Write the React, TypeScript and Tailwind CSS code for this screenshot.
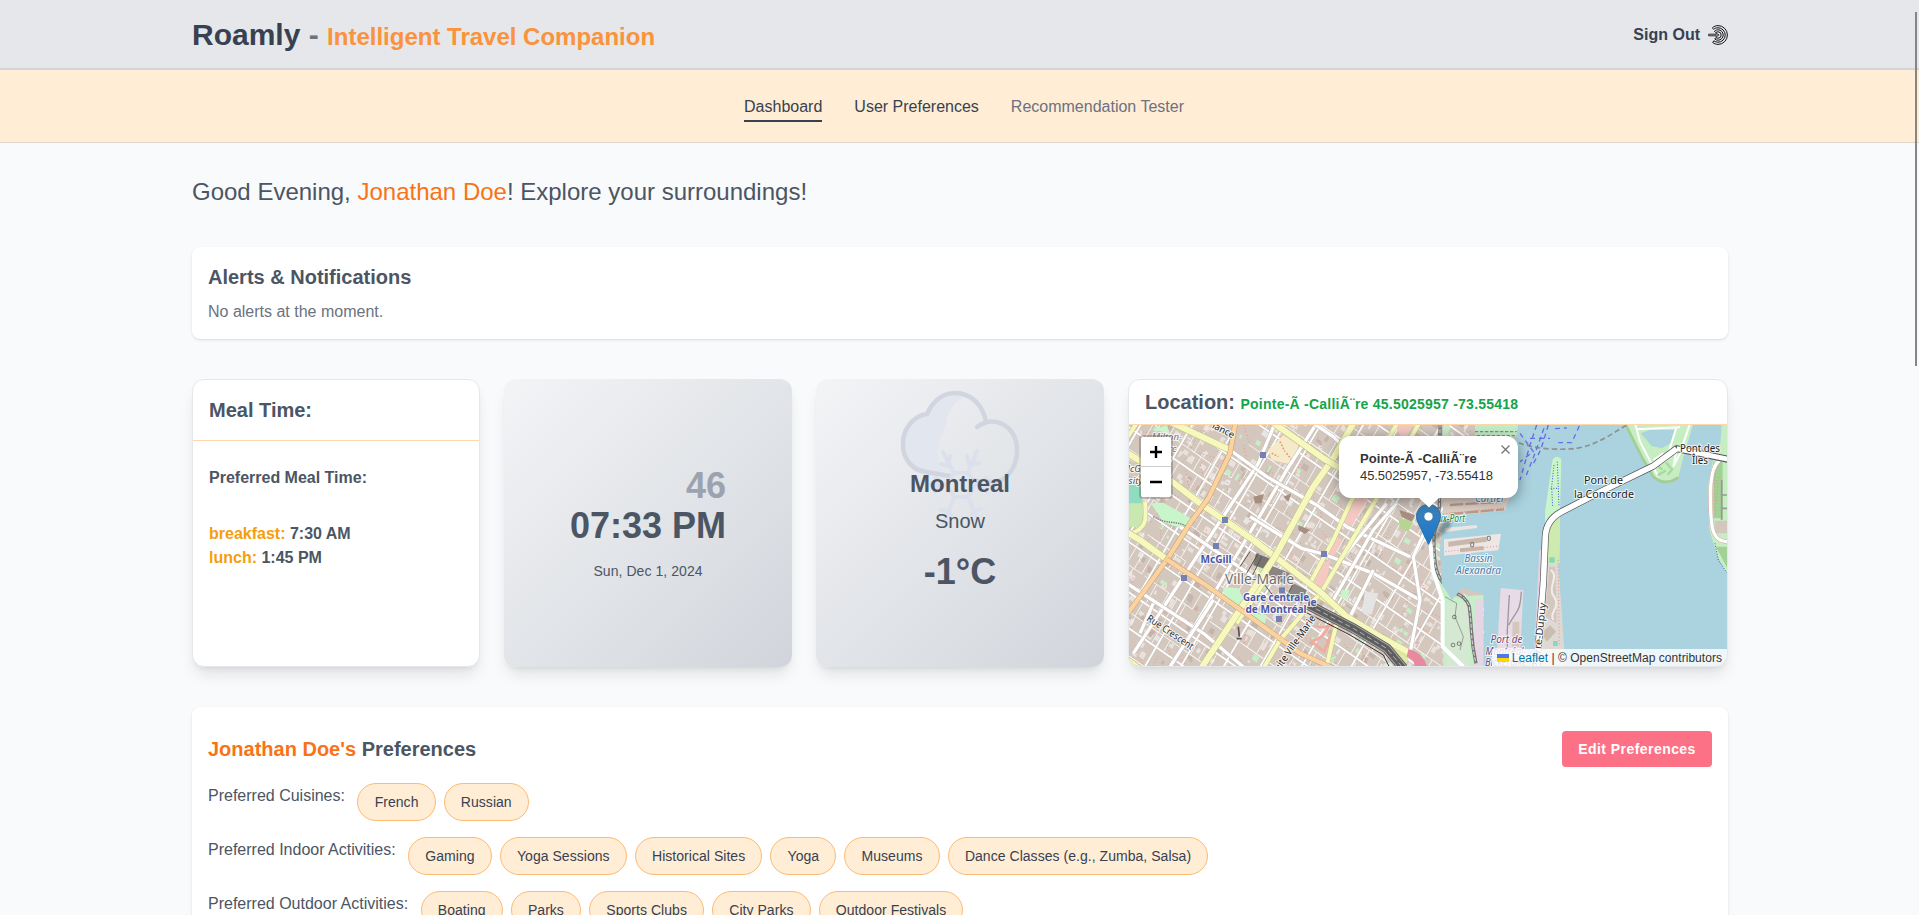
import React from "react";

const p = "fill-none";

/* Deterministic city blocks laid along the two street directions of the map. */
function buildCity() {
  let s = 7;
  const r = () => {
    s = (s * 16807) % 2147483647;
    return s / 2147483647;
  };
  const at = (a: number, b: number) => {
    const x = 1129 + a * 0.82 + b * 0.5;
    const y = 425 + a * 0.57 - b * 0.866;
    return [x, y] as const;
  };
  const quad = (a: number, b: number, w: number, h: number) => {
    const q = [at(a, b), at(a + w, b), at(a + w, b + h), at(a, b + h)];
    return "M" + q.map((c) => c[0].toFixed(1) + " " + c[1].toFixed(1)).join("L") + "Z";
  };
  const out = { light: "", grey: "", dark: "", green: "", minor: "", major: "", red: "" };
  let bi = 0;
  for (let b = -300; b < 300; bi++) {
    const h = 13 + r() * 10;
    for (let a = -20; a < 500; ) {
      const w = 16 + r() * 16;
      const [cx, cy] = at(a + w / 2, b + h / 2);
      if (cx > 1110 && cx < 1470 && cy > 405 && cy < 690) {
        const n = 2 + Math.floor(r() * 3);
        for (let k = 0; k < n; k++) {
          const q = quad(a + r() * w * 0.7, b + r() * h * 0.7, 2 + r() * 5, 2 + r() * 5);
          const t = r();
          if (t < 0.6) out.light += q;
          else if (t < 0.82) out.dark += q;
          else if (t < 0.94) out.grey += q;
          else out.green += q;
        }
        const e = quad(a, b, w, h).slice(0, -1);
        if (r() < 0.75) out.minor += e;
        const m1 = at(a + w / 2, b);
        const m2 = at(a + w / 2, b + h);
        if (r() < 0.55) out.minor += `M${m1[0].toFixed(1)} ${m1[1].toFixed(1)}L${m2[0].toFixed(1)} ${m2[1].toFixed(1)}`;
        const d1 = at(a + r() * w, b + 2);
        const d2 = at(a + r() * w, b + 2 + r() * h);
        out.red += `M${d1[0].toFixed(1)} ${d1[1].toFixed(1)}L${d2[0].toFixed(1)} ${d2[1].toFixed(1)}`;
      }
      a += w;
    }
    if (bi % 2 === 0) {
      const l1 = at(-20, b);
      const l2 = at(500, b);
      out.major += `M${l1[0].toFixed(1)} ${l1[1].toFixed(1)}L${l2[0].toFixed(1)} ${l2[1].toFixed(1)}`;
    }
    b += h;
  }
  for (let a = 10; a < 500; a += 31 + r() * 14) {
    const l1 = at(a, -300);
    const l2 = at(a, 300);
    out.major += `M${l1[0].toFixed(1)} ${l1[1].toFixed(1)}L${l2[0].toFixed(1)} ${l2[1].toFixed(1)}`;
  }
  return out;
}
const city = buildCity();

function Road({ d, c, k, w }: { d: string; c: string; k: string; w: number }) {
  return (
    <g className={p} strokeLinejoin="round">
      <path d={d} stroke={k} strokeWidth={w + 3} />
      <path d={d} stroke={c} strokeWidth={w} />
    </g>
  );
}

type LabelProps = {
  x: number; y: number; size: number; fill: string; children: string;
  rot?: number; bold?: boolean; italic?: boolean; len?: number;
};
function Label({ x, y, size, fill, children, rot = 0, bold, italic, len }: LabelProps) {
  return (
    <text
      x={x} y={y} fontSize={size} fill={fill} textAnchor="middle"
      transform={rot ? `rotate(${rot} ${x} ${y})` : undefined}
      textLength={len} lengthAdjust="spacingAndGlyphs"
      fontWeight={bold ? 700 : 400} fontStyle={italic ? "italic" : "normal"}
      stroke="#fff" strokeOpacity={0.75} strokeWidth={2.2} paintOrder="stroke" strokeLinejoin="round"
    >
      {children}
    </text>
  );
}

const stations = [[429, 255], [315, 450], [288, 528], [612, 552], [192, 624], [486, 661], [477, 747]];

const yellowWest = [
  "M0 235L27 252L150 330L240 400L400 510L465 560L600 665L680 740L780 800L880 855",
  "M240 900L465 560L580 350L640 265L700 160",
  "M150 155L330 240",
  "M455 155L610 265L670 300",
  "M10 480L60 510L140 568",
];
const yellowThin = [
  "M20 205L50 160", "M30 492C80 475 80 450 75 395", "M20 865L60 895",
  "M835 155L690 400L640 510L570 640", "M900 155L770 385L605 665L480 810L430 895",
  "M600 680L660 720L640 800L620 890", "M410 600L430 640L350 760",
];
const whiteRoads = [
  "M465 160L415 280L240 545L40 850", "M590 160L500 300L430 420L270 690L150 895", "M330 240L440 320L590 405L680 470L870 560",
  "M180 470L290 545L400 620", "M20 640L250 790L375 895", "M390 440L545 535L610 552L760 610L900 690",
  "M830 400L760 480L640 690", "M930 450L880 560L900 690L870 850", "M520 120L640 200L770 330",
  "M100 700L60 790", "M280 690L150 890", "M650 585L800 400", "M690 740L760 600",
];

function CityMap() {
  return (
    <svg className="block h-full w-full" viewBox="1129 425 598 241" preserveAspectRatio="none" fontFamily="'Noto Sans', sans-serif">
      <defs>
        <clipPath id="land">
          <path d="M1120 420H1519L1514 450L1462 500L1444 500L1440 550L1442 585L1452 600L1462 588L1484 594V670H1120Z" />
        </clipPath>
      </defs>
      <rect x="1129" y="425" width="598" height="241" fill="#aad3df" />
      <g clipPath="url(#land)">
        <rect x="1120" y="420" width="400" height="250" fill="#d3c7be" />
        <path d={city.light} fill="#e9e2dc" />
        <path d={city.grey} fill="#e6e6e6" />
        <path d={city.dark} fill="#c4b6ab" />
        <path d={city.green} fill="#c5eec6" />
        <path d={city.minor} className={p} stroke="#f7f4f1" strokeWidth="1" />
        <path d={city.red} className={p} stroke="#ef8f87" strokeWidth="1" strokeDasharray="1 2.5" />
        <path d={city.major} className={p} stroke="#c6bcb5" strokeWidth="2.5" />
        <path d={city.major} className={p} stroke="#fff" strokeWidth="1.8" />
        <g transform="translate(1120 370) scale(.33333)">
          <path d="M20 340L62 350L70 420L65 470L20 470Z" fill="#c8e8b0" />
          <path d="M20 340L62 350L66 400L20 400Z" fill="#8fdcc0" />
          <path d="M92 400L130 398L225 452L195 480L130 455Z M310 650L355 655L372 690L360 710L310 685Z M375 725L440 735L435 760L400 750Z M100 180L140 165L150 190Z M665 660L690 660L680 690L660 680Z" fill="#c8f5ca" />
          <path d="M100 440C140 465 170 450 200 470" className={p} stroke="#777" strokeWidth="4" strokeDasharray="4 3" />
          <path d="M445 240L490 195L535 225L520 285L455 270Z" fill="#f6ebc8" />
          <path d="M455 250l20 10M480 215l15 30M500 250l14 18" stroke="#ef8f87" strokeWidth="5" strokeDasharray="5 5" />
          <path d="M400 380L432 372L425 400L405 400Z M490 380L515 370L505 395Z M535 465L570 480L555 492L535 480Z M838 420L885 435L875 455L845 440Z" fill="#a68f80" />
          <path d="M835 445L880 455L865 485L840 475Z" fill="#b5d690" />
          <path d="M700 385L745 385L690 475L665 455Z M592 590L632 568L615 655L580 640Z M650 500L668 510L640 560L622 550Z M825 165L880 165L850 215Z" fill="#f5c9c2" />
          <path d="M590 770C630 775 640 765 640 750M625 770C615 800 590 810 575 815L612 845L635 790" className={p} stroke="#f0ad9f" strokeWidth="9" />
          <path d="M735 665L775 670L755 735L725 725Z" fill="#e5e4e4" />
          {whiteRoads.map((d) => <Road key={d} d={d} c="#ffffff" k="#c4bcb6" w={10} />)}
          <path d="M408 550L455 568L442 600L400 585Z" fill="#77736f" />
          <path d="M450 585L510 610L490 640L445 615Z M520 640L560 660L545 700L500 680Z" fill="#8a8581" />
          <path d="M390 545L360 590M415 550L380 610M425 560L398 615M430 640L470 690M520 640L495 690" className={p} stroke="#555" strokeWidth="3" />
          <path d="M680 740L870 850L860 880L670 765Z" fill="#dfe9a6" />
          <path d="M690 745L760 795" className={p} stroke="#ef9d83" strokeWidth="12" />
          {yellowThin.map((d) => <Road key={d} d={d} c="#f6f8bd" k="#c5c783" w={12} />)}
          {yellowWest.map((d) => <Road key={d} d={d} c="#f6f8bd" k="#bfc27c" w={18} />)}
          <Road d="M347 155L330 250L265 385L210 460L140 570L20 735" c="#fbd3a0" k="#c79d69" w={13} />
          <Road d="M140 568L250 640L370 725L540 850L640 895" c="#fbd3a0" k="#c79d69" w={13} />
          <path d="M565 705L700 775L800 835L850 895" className={p} stroke="#555" strokeWidth="30" />
          <path d="M565 705L700 775L800 835L850 895" className={p} stroke="#a5a5a5" strokeWidth="25" />
          <path d="M565 705L700 775L800 835L850 895" className={p} stroke="#5e5e5e" strokeWidth="19" />
          <path d="M565 705L700 775L800 835L850 895" className={p} stroke="#ddd" strokeWidth="2" strokeDasharray="16 9" />
          <path d="M540 718L690 795L790 855L810 895" className={p} stroke="#333" strokeWidth="3" />
          <path d="M865 838C900 845 920 870 920 895L880 895C890 870 870 865 860 860Z" fill="#e78aa0" />
          <path d="M355 770L358 800M350 806L365 806" className={p} stroke="#555" strokeWidth="5" />
        </g>
        <g transform="translate(1420 370) scale(.33333)">
          <path d="M70 160L55 400L48 530L58 620L100 680L190 675V890H70V700L48 640V540L60 380L90 160Z" fill="#c6efc9" />
          <path d="M165 690H190V890H160Z" fill="#e6d6e3" />
          <path d="M80 700H150V890H80Z" fill="#d5e8d2" />
          <path d="M60 160C60 400 62 440 42 490C40 560 45 600 60 625C90 680 130 660 148 710C158 790 150 800 168 880" className={p} stroke="#777" strokeWidth="10" />
          <path d="M60 160C60 400 62 440 42 490C40 560 45 600 60 625C90 680 130 660 148 710C158 790 150 800 168 880" className={p} stroke="#ddd" strokeWidth="3" strokeDasharray="12 5" />
          <path d="M30 500L38 600L68 690L68 830L130 890" className={p} stroke="#fff" strokeWidth="12" />
          <path d="M75 680L110 700L105 740L130 800L120 840" className={p} stroke="#777" strokeWidth="2" />
          <path d="M165 165H297V200H165Z" fill="#c3edc8" />
          <path d="M165 185H290M170 197H297" className={p} stroke="#8c8c80" strokeWidth="4" strokeDasharray="10 5" />
        </g>
      </g>
      <g transform="translate(1420 370) scale(.33333)">
        <path d="M70 372L268 380L256 422L70 440Z" fill="#ded0c6" />
        <path d="M90 405L250 395M90 432L252 418" className={p} stroke="#b99c8c" strokeWidth="7" strokeDasharray="40 6" />
        <path d="M70 432L252 412" className={p} stroke="#ef8f87" strokeWidth="3" strokeDasharray="3 6" />
        <path d="M75 474L170 465L172 474L75 486Z" fill="#ebe6e1" />
        <path d="M72 508L243 491L235 541L72 557Z" fill="#ece7e4" />
        <path d="M85 515L200 500L200 515L85 530Z M120 535L190 528L192 540L120 547Z" fill="#c9b7ab" />
        <path d="M76 545L236 528" className={p} stroke="#ef8f87" strokeWidth="3" strokeDasharray="3 6" />
        <g className={p} stroke="#444" strokeWidth="2">
          <rect x="152" y="518" width="9" height="12" rx="2" /><rect x="202" y="499" width="9" height="12" rx="2" />
          <rect x="98" y="736" width="10" height="10" rx="3" /><rect x="94" y="820" width="10" height="10" rx="3" /><rect x="112" y="816" width="10" height="10" rx="3" />
        </g>
        <path d="M242 654L310 661L298 895H228Z" fill="#e9dae8" />
        <path d="M278 755H298V830H276Z" fill="#d3c7be" />
        <path d="M268 675L262 780V860M304 665C300 730 290 720 266 765" className={p} stroke="#9a9a9a" strokeWidth="4" />

        <path d="M375 425L398 268Q411 252 424 268L420 430L418 580L375 580Z" fill="#c8f5c9" />
        <path d="M384 470L420 440L418 582L378 582Z" fill="#cfeaae" />
        <path d="M375 582H414L425 720L436 895H345L360 540Z" fill="#ded9d4" />
        <path d="M358 540L368 540L360 700L345 895H340Z" fill="#e4d3e3" />
        <path d="M388 590L406 590L410 760L375 740Z" fill="#d3c7be" />
        <path d="M392 600C420 620 380 650 402 680S385 730 400 750" className={p} stroke="#f1ede9" strokeWidth="6" />
        <path d="M365 790L390 765L408 785L380 815Z" fill="#cbbcb0" />
        <path d="M388 562h16v16h-16zM399 813h14v15h-14z" fill="#85d9b8" />
        <path d="M414 570L418 830" className={p} stroke="#ef8f87" strokeWidth="3" strokeDasharray="3 7" />
        <path d="M412 275L417 410M402 285L395 350L398 410M392 355H412" className={p} stroke="#4b4be0" strokeWidth="3" strokeDasharray="3 5" />

        <path d="M615 160L665 260L700 320Q735 350 775 322L790 262L820 160Z" fill="#c6eec2" />
        <path d="M615 160L665 260L700 320Q735 350 775 322" className={p} stroke="#a3cd93" strokeWidth="8" />
        <path d="M662 190L690 180H765L752 220L725 235L695 228Z" fill="#aad3df" />
        <path d="M645 160L660 215L715 320M650 178L780 172M810 160L780 250L760 290L770 240M700 270L730 250M770 170L745 250" className={p} stroke="#fff" strokeWidth="6" />
        <path d="M710 285l15 12M740 280l12 14M715 315l20-12M745 312l12-14" stroke="#a9d99f" strokeWidth="7" strokeLinecap="round" />

        <path d="M905 160H925V620L893 560L868 480L863 350L878 275L900 240Z" fill="#c6eec2" />
        <path d="M880 275H908V445H880Z" fill="#a2d096" />
        <path d="M888 530L925 530V600Z" fill="#a2d096" />
        <path d="M884 452H925V490H884Z" fill="#d3c7be" />
        <path d="M900 270C870 290 870 360 872 420S880 515 925 515" className={p} stroke="#d8a5a5" strokeWidth="13" />
        <path d="M900 270C870 290 870 360 872 420S880 515 925 515" className={p} stroke="#fff" strokeWidth="10" />
        <path d="M905 330V450M905 375H925M905 415H925" className={p} stroke="#999" strokeWidth="5" />
        <path d="M885 520L895 570L925 615" className={p} stroke="#4b4be0" strokeWidth="3" strokeDasharray="3 5" />
        <path d="M885 300V440M895 320L890 400" className={p} stroke="#ef8f87" strokeWidth="3" strokeDasharray="3 7" />

        <path d="M297 218C350 240 430 240 470 235C530 225 570 195 620 165" className={p} stroke="#8f8f8f" strokeWidth="5" strokeDasharray="16 9" />
        <g className={p} stroke="#6b6be8" strokeWidth="4" strokeDasharray="15 12">
          <path d="M350 165L330 225L300 330M372 175L345 250L318 318M385 165L362 240L335 290M300 190L340 245L300 275M478 168L455 218H415M405 176L440 174M330 205H390" />
        </g>

        <g className={p} strokeLinejoin="round">
          <path d="M350 895L370 640L376 500Q378 450 425 425L540 366L700 288L770 236L925 268" stroke="#555" strokeWidth="21" />
          <path d="M350 895L370 640L376 500Q378 450 425 425L540 366L700 288L770 236" stroke="#fff" strokeWidth="17" />
          <path d="M770 236L925 268" stroke="#fff" strokeWidth="15" />
        </g>
      </g>

      {stations.map(([x, y]) => (
        <rect key={`${x}-${y}`} x={1117 + x / 3} y={367 + y / 3} width="6" height="6" fill="#7681b3" />
      ))}
      <Label x={1167} y={440} size={9.5} fill="#777" italic>Milton-</Label>
      <Label x={1167} y={452} size={9.5} fill="#777" italic>Parc</Label>
      <Label x={1135} y={472} size={9.5} fill="#5b5638" italic>McGill</Label>
      <Label x={1122} y={484} size={9.5} fill="#5b5638" italic>University</Label>
      <Label x={1222} y={433} size={9.5} fill="#222" rot={27}>lance</Label>
      <Label x={1216} y={563} size={10.5} fill="#4a57a8" bold len={31}>McGill</Label>
      <Label x={1259.5} y={584} size={13.5} fill="#6f6f6f" len={69}>Ville-Marie</Label>
      <Label x={1312} y={606} size={10} fill="#4a57a8" bold>le</Label>
      <Label x={1276} y={600.5} size={10.5} fill="#4a57a8" bold len={66}>Gare centrale</Label>
      <Label x={1276} y={612.5} size={10.5} fill="#4a57a8" bold len={61}>de Montréal</Label>
      <Label x={1168.5} y={635} size={10} fill="#333" rot={34} len={54}>Rue Crescent</Label>
      <Label x={1296} y={647} size={10} fill="#222" rot={-55} len={70}>Suite Ville-Marie</Label>
      <Label x={1490} y={502} size={10} fill="#4f7dab" italic len={30}>Cartier</Label>
      <Label x={1446} y={521.5} size={10} fill="#238a3c" italic len={38}>Vieux-Port</Label>
      <Label x={1478.5} y={561.5} size={10.5} fill="#4f7dab" italic len={28}>Bassin</Label>
      <Label x={1478.5} y={573.5} size={10.5} fill="#4f7dab" italic len={45}>Alexandra</Label>
      <Label x={1506.5} y={642.5} size={10.5} fill="#6f4c7c" italic len={32}>Port de</Label>
      <Label x={1506} y={654.5} size={10.5} fill="#6f4c7c" italic len={41}>Montréal-</Label>
      <Label x={1506} y={666} size={10.5} fill="#6f4c7c" italic len={42}>Bickerdike</Label>
      <Label x={1542.5} y={636} size={10} fill="#333" rot={-84} len={66}>Pierre-Dupuy</Label>
      <Label x={1603.5} y={484} size={11} fill="#222" len={39}>Pont de</Label>
      <Label x={1604} y={497.5} size={11} fill="#222" len={60}>la Concorde</Label>
      <Label x={1700} y={451.5} size={10.5} fill="#222" len={40}>Pont des</Label>
      <Label x={1700} y={463.5} size={10.5} fill="#222" len={16}>Îles</Label>
    </svg>
  );
}

function MarkerPin() {
  return (
    <svg className="absolute left-[287px] top-[79px] h-[41px] w-[41px]" viewBox="0 0 41 41">
      <defs>
        <linearGradient id="pin" x1="0" y1="0" x2="0" y2="1">
          <stop offset="0" stopColor="#3b83b8" /><stop offset="1" stopColor="#1d76cf" />
        </linearGradient>
        <filter id="soft"><feGaussianBlur stdDeviation="1.6" /></filter>
      </defs>
      <path d="M12.5 40.5L27 18C33 12 39 19 31 27Z" fill="#000" opacity=".3" filter="url(#soft)" />
      <path d="M12.5 .5C5.9 .5 .5 5.8 .5 12.5c0 2.7 .9 5.2 2.4 7.9L12.5 40.4 22.1 20.4c1.5-2.7 2.4-5.2 2.4-7.9C24.5 5.8 19.1 .5 12.5 .5Z" fill="url(#pin)" stroke="#2a70a6" strokeWidth="1" />
      <circle cx="12.5" cy="12.5" r="4.5" fill="#fff" stroke="#2a70a6" strokeWidth=".6" />
    </svg>
  );
}

function SignOutIcon() {
  return (
    <svg className="h-5 w-5" viewBox="0 0 20 20" fill="none" strokeLinecap="round" strokeLinejoin="round">
      <path d="M4.600 2.700C6.200 1.200 8 .6 10 .6a9.400 9.400 0 0 1 0 18.800c-1.900 0-3.700-.6-5.300-1.900l1.100-1.700c1.200.9 2.600 1.400 4.200 1.400a7.200 7.200 0 0 0 0-14.400c-1.500 0-2.800.4-4 1.200Z" stroke="#111" strokeWidth="1" fill="#e5e7eb" />
      <path d="M6.800 6C7.800 5.200 8.900 4.800 10 4.800a5.200 5.200 0 0 1 0 10.400c-1.200 0-2.300-.4-3.200-1.200L8 12.500c.6.500 1.200.7 2 .7a3.200 3.200 0 0 0 0-6.400c-.7 0-1.300.2-1.900.6Z" stroke="#111" strokeWidth="1" fill="#e5e7eb" />
      <path d="M.9 9.100H8V8L11.200 10 8 12V10.900H.9Z" fill="#888" stroke="#333" strokeWidth=".8" />
    </svg>
  );
}

function SnowCloud() {
  return (
    <svg className="absolute left-[84px] top-[11px] h-[140px] w-[120px]" viewBox="0 0 120 140" fill="none" strokeLinecap="round" strokeLinejoin="round">
      <path d="M62 4C45 3 33 12 27 24C12 25 3 38 3 54C4 69 15 80 27 82L44 84C36 66 37 55 43 42C48 33 46 16 62 8Z" fill="#e2e6ef" />
      <path d="M50 86L26 82C11 80 3 68 3 54C3 39 13 26 27 24C33 11 43 3 55 3C71 3 83 15 86 32C103 29 117 41 117 60C117 77 108 89 96 92C88 92 78 92 72 90" stroke="#d1d5df" strokeWidth="4.500" />
      <path d="M77 37Q81 34 87 32" stroke="#d1d5df" strokeWidth="4.500" />
      <g stroke="#dbe0ec" strokeWidth="4">
        <path d="M54 83H68L75 95L68 107H54L47 95ZM54 83L43 62M68 83L77 61M75 95H93M47 95H31M54 107L44 133M68 107L79 132" />
        <path d="M41 74L48 76L50 66M67 66L69 75L79 73M86 88L81 95L87 102M36 88L41 95L35 102M41 120L49 121L52 129M81 119L73 122L70 128" />
      </g>
    </svg>
  );
}

const card = "rounded-xl shadow-[0_10px_15px_-3px_rgba(0,0,0,0.1),0_4px_6px_-4px_rgba(0,0,0,0.1)]";
const box = "rounded-lg bg-white shadow-[0_1px_3px_rgba(0,0,0,0.1),0_1px_2px_-1px_rgba(0,0,0,0.1)]";

const preferences = [
  { label: "Preferred Cuisines:", items: ["French", "Russian"] },
  { label: "Preferred Indoor Activities:", items: ["Gaming", "Yoga Sessions", "Historical Sites", "Yoga", "Museums", "Dance Classes (e.g., Zumba, Salsa)"] },
  { label: "Preferred Outdoor Activities:", items: ["Boating", "Parks", "Sports Clubs", "City Parks", "Outdoor Festivals"] },
];

const place = "Pointe-Ã\u00a0-CalliÃ¨re";

export default function App() {
  return (
    <div className="relative h-screen overflow-hidden bg-[#f9fafb] font-['Liberation_Sans',Arial,sans-serif] text-[#4b5563]">
      <header className="h-[70px] border-b-2 border-[#d1d5db] bg-[#e5e7eb]">
        <div className="ml-48 flex w-[1536px] items-center justify-between pt-[17px]">
          <h1 className="text-3xl font-bold text-[#374151]">
            Roamly <span className="text-[#6b7280]">-</span>{" "}
            <span className="text-2xl text-[#fb923c]">Intelligent Travel Companion</span>
          </h1>
          <button className="flex items-center gap-2 font-bold text-[#374151]">
            Sign Out <SignOutIcon />
          </button>
        </div>
      </header>

      <nav className="flex h-[73px] items-start justify-center gap-8 border-b border-[#ddd6cc] bg-[#ffedd5] pt-[25px] pl-[9px] text-[#374151]">
        <a className="border-b-2 border-[#374151] pb-px">Dashboard</a>
        <a>User Preferences</a>
        <a className="text-[#6b7280]">Recommendation Tester</a>
      </nav>

      <main className="ml-48 flex w-[1536px] flex-col gap-10 pt-[33px]">
        <h2 className="-mb-px text-2xl">
          Good Evening, <span className="text-[#f97316]">Jonathan Doe</span>! Explore your surroundings!
        </h2>

        <section className={`${box} px-4 pt-4 pb-[15px]`}>
          <h3 className="mb-[9px] text-xl font-bold">Alerts &amp; Notifications</h3>
          <p className="text-[#6b7280]">No alerts at the moment.</p>
        </section>

        <section className="grid grid-cols-5 gap-6">
          <div className={`${card} h-72 border border-[#e5e7eb] bg-white`}>
            <h3 className="border-b border-[#fed7aa] p-4 text-xl font-bold">Meal Time:</h3>
            <div className="px-4 pt-[25px] font-bold">
              <p className="mb-8">Preferred Meal Time:</p>
              <p><span className="text-[#f59e0b]">breakfast:</span> 7:30 AM</p>
              <p><span className="text-[#f59e0b]">lunch:</span> 1:45 PM</p>
            </div>
          </div>

          <div className={`${card} flex h-72 flex-col items-center justify-center bg-linear-to-br/srgb from-[#f3f4f6] to-[#d1d5db]`}>
            <div className="pt-px text-right text-4xl font-bold">
              <p className="text-[#9ca3af]">46</p>
              <p>07:33 PM</p>
            </div>
            <p className="mt-[15px] text-sm tracking-[0.06px]">Sun, Dec 1, 2024</p>
          </div>

          <div className={`${card} relative flex h-72 flex-col items-center bg-linear-to-br/srgb from-[#f3f4f6] to-[#d1d5db] pt-[89px]`}>
            <SnowCloud />
            <p className="relative text-2xl font-bold">Montreal</p>
            <p className="relative mt-[7px] text-xl">Snow</p>
            <p className="relative mt-[17px] text-4xl font-bold">-1°C</p>
          </div>

          <div className={`${card} col-span-2 flex h-72 flex-col overflow-hidden border border-[#e5e7eb] bg-white`}>
            <div className="flex h-[45px] items-baseline gap-[5.5px] whitespace-nowrap border-b border-[#fed7aa] pt-2 pl-4">
              <h3 className="text-xl font-bold">Location:</h3>
              <p className="text-sm font-bold tracking-[0.235px] text-[#16a34a]">{place} 45.5025957 -73.55418</p>
            </div>
            <div className="relative min-h-0 flex-1">
              <CityMap />
              <MarkerPin />
              <div className="absolute left-2.5 top-2.5 rounded-sm border-2 border-black/20 bg-clip-padding">
                <div className="flex h-[30px] w-[30px] items-center justify-center rounded-t-xs border-b border-[#ccc] bg-white">
                  <svg className="h-3 w-3" viewBox="0 0 12 12"><path d="M6 0V12M0 6H12" stroke="#000" strokeWidth="2.400" /></svg>
                </div>
                <div className="flex h-[30px] w-[30px] items-center justify-center rounded-b-xs bg-white">
                  <svg className="h-3 w-3" viewBox="0 0 12 12"><path d="M0 6H12" stroke="#000" strokeWidth="2.400" /></svg>
                </div>
              </div>
              <div className="absolute left-[210px] top-[11px] h-[62px] w-[179px] rounded-xl bg-white pt-[14px] pl-[21px] text-[13px] leading-[17px] text-[#333] shadow-[0_3px_14px_rgba(0,0,0,0.4)]">
                <p className="font-bold tracking-[0.1px]">{place}</p>
                <p className="tracking-[-0.08px]">45.5025957, -73.55418</p>
                <svg className="absolute right-[8px] top-[9px] h-[9px] w-[9px]" viewBox="0 0 9 9"><path d="M.5 .5L8.500 8.500M8.500 .5L.5 8.500" stroke="#757575" strokeWidth="1.300" /></svg>
                <svg className="absolute left-[79px] top-[61px] h-[11px] w-[22px]" viewBox="0 0 22 11"><path d="M0 0H22L11 10.500Z" fill="#fff" /></svg>
              </div>
              <div className="absolute bottom-0 right-0 flex h-[17px] items-center whitespace-nowrap bg-white/80 px-[5px] text-xs text-[#333]">
                <svg className="mr-[3px] h-2 w-3" viewBox="0 0 12 8"><path d="M0 0H12V4H0Z" fill="#4c7be1" /><path d="M0 4H12V8H0Z" fill="#ffd500" /></svg>
                <span className="tracking-[0.04px]"><span className="text-[#0078a8]">Leaflet</span> | © OpenStreetMap contributors</span>
              </div>
            </div>
          </div>
        </section>

        <section className={`${box} h-[400px] px-4 pt-6`}>
          <div className="mb-4 flex items-center justify-between">
            <h3 className="text-xl font-bold"><span className="text-[#f97316]">Jonathan Doe's</span> Preferences</h3>
            <button className="h-9 w-[150px] rounded bg-[#fd7186] text-sm font-bold tracking-[0.45px] text-white">Edit Preferences</button>
          </div>
          {preferences.map((row) => (
            <div key={row.label} className="mb-4 flex items-start">
              <span className="mr-[12.5px] pt-px">{row.label}</span>
              <div className="flex gap-2">
                {row.items.map((item) => (
                  <span key={item} className="rounded-full border border-[#fdba74] bg-[#ffedd5] px-[16.2px] py-2 text-sm tracking-[0.04px] text-[#374151]">{item}</span>
                ))}
              </div>
            </div>
          ))}
        </section>
      </main>

      <div className="absolute right-[2px] top-3 h-[354px] w-[2px] bg-[#858585]" />
    </div>
  );
}
